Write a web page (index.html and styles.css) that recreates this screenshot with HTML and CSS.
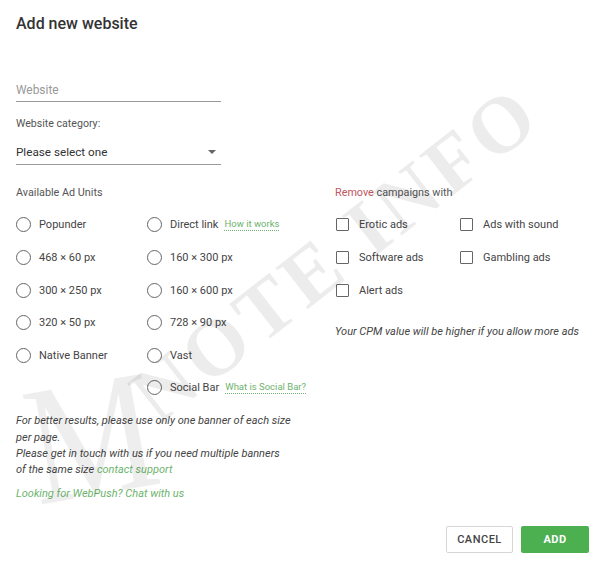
FILE: index.html
```html
<!DOCTYPE html>
<html>
<head>
<meta charset="utf-8">
<link rel="stylesheet" href="styles.css">
</head>
<body>
<div class="dialog">
  <h1 class="title">Add new website</h1>
  <div class="field input">Website</div>
  <div class="label">Website category:</div>
  <div class="field select"><span>Please select one</span><span class="caret"></span></div>

  <div class="sections">
    <div class="left">
      <div class="heading">Available Ad Units</div>
      <div class="units">
        <div class="opt"><span class="radio"></span>Popunder</div>
        <div class="opt"><span class="radio"></span>Direct link<a class="help">How it works</a></div>
        <div class="opt"><span class="radio"></span>468 × 60 px</div>
        <div class="opt"><span class="radio"></span>160 × 300 px</div>
        <div class="opt"><span class="radio"></span>300 × 250 px</div>
        <div class="opt"><span class="radio"></span>160 × 600 px</div>
        <div class="opt"><span class="radio"></span>320 × 50 px</div>
        <div class="opt"><span class="radio"></span>728 × 90 px</div>
        <div class="opt"><span class="radio"></span>Native Banner</div>
        <div class="opt"><span class="radio"></span>Vast</div>
        <div class="opt"></div>
        <div class="opt"><span class="radio"></span>Social Bar<a class="help">What is Social Bar?</a></div>
      </div>
      <p class="note">For better results, please use only one banner of each size<br>per page.<br>Please get in touch with us if you need multiple banners<br>of the same size <a class="green">contact support</a></p>
      <p class="note green">Looking for WebPush? Chat with us</p>
    </div>
    <div class="right">
      <div class="heading"><span class="red">Remove</span> campaigns with</div>
      <div class="checks">
        <div class="opt"><span class="box"></span>Erotic ads</div>
        <div class="opt"><span class="box"></span>Ads with sound</div>
        <div class="opt"><span class="box"></span>Software ads</div>
        <div class="opt"><span class="box"></span>Gambling ads</div>
        <div class="opt"><span class="box"></span>Alert ads</div>
      </div>
      <p class="cpm">Your CPM value will be higher if you allow more ads</p>
    </div>
  </div>

  <div class="actions">
    <button class="btn cancel">CANCEL</button>
    <button class="btn add">ADD</button>
  </div>
  <div class="wm wm-m">M</div>
  <div class="wm wm-text">NOTE INFO</div>
</div>
</body>
</html>
```
FILE: styles.css
```css
html, body {
  margin: 0;
  padding: 0;
  background: #fff;
}
body {
  font-family: Roboto, "Liberation Sans", sans-serif;
  color: #444;
  width: 600px;
  height: 564px;
  overflow: hidden;
}
.dialog {
  position: relative;
  height: 564px;
  box-sizing: border-box;
  padding: 14px 11px 0 16px;
  overflow: hidden;
}
.title {
  margin: 0;
  font-size: 16px;
  line-height: 20px;
  font-weight: 500;
  color: #333;
}
.field {
  width: 205px;
  height: 24px;
  line-height: 24px;
  border-bottom: 1px solid #9a9a9a;
}
.input {
  margin-top: 43px;
  padding-top: 1px;
  height: 23px;
  color: #999;
  font-size: 11.9px;
}
.label {
  margin-top: 14px;
  font-size: 10.6px;
  line-height: 16px;
  color: #555;
}
.select {
  margin-top: 8px;
  color: #333;
  font-size: 11.7px;
  display: flex;
  justify-content: space-between;
  align-items: center;
}
.caret {
  width: 0;
  height: 0;
  border-left: 4px solid transparent;
  border-right: 4px solid transparent;
  border-top: 4px solid #666;
  margin-right: 5px;
}
.sections {
  display: flex;
  margin-top: 20px;
}
.left {
  width: 319px;
}
.right {
  flex: 1;
}
.heading {
  font-size: 10.8px;
  line-height: 16px;
  color: #555;
}
.red {
  color: #c0585e;
}
.units {
  display: grid;
  grid-template-columns: 131px auto;
  grid-auto-rows: 32.6px;
  margin-top: 7.7px;
}
.checks {
  display: grid;
  grid-template-columns: 124px auto;
  grid-auto-rows: 32.6px;
  margin-top: 7.7px;
  padding-left: 1px;
}
.opt {
  display: flex;
  align-items: center;
  font-size: 11px;
  color: #444;
  white-space: nowrap;
}
.radio {
  width: 13px;
  height: 13px;
  border: 1.6px solid #666;
  border-radius: 50%;
  margin-right: 8px;
  flex: none;
}
.box {
  width: 11px;
  height: 11px;
  border: 1.6px solid #666;
  border-radius: 1px;
  margin-right: 10px;
  flex: none;
}
.help {
  margin-left: 6px;
  font-size: 9.5px;
  color: #6db36d;
  border-bottom: 1px dotted #6db36d;
  line-height: 12px;
}
.note {
  margin: 9px 0 0;
  font-size: 11px;
  line-height: 16.3px;
  font-style: italic;
  color: #444;
  white-space: nowrap;
}
.note + .note {
  margin-top: 7.5px;
}
.green {
  color: #6db36d;
}
.cpm {
  margin: 17.7px 0 0;
  font-size: 11px;
  line-height: 16px;
  font-style: italic;
  color: #444;
}
.actions {
  display: flex;
  justify-content: flex-end;
  gap: 8px;
  margin-top: 24px;
}
.btn {
  height: 27px;
  font-family: Roboto, "Liberation Sans", sans-serif;
  font-size: 11px;
  font-weight: 500;
  letter-spacing: 0.5px;
  border-radius: 2px;
  cursor: pointer;
}
.cancel {
  width: 67px;
  background: #fff;
  border: 1px solid #d6d6d6;
  color: #444;
}
.add {
  width: 68px;
  background: #4caf50;
  border: none;
  color: #fff;
  font-weight: 700;
}
.wm {
  position: absolute;
  font-family: "Liberation Serif", serif;
  font-weight: 700;
  color: rgba(0, 0, 0, 0.075);
  white-space: nowrap;
  pointer-events: none;
}
.wm-text {
  left: 158px;
  top: 359px;
  font-size: 80px;
  line-height: 80px;
  letter-spacing: 5px;
  transform: rotate(-38deg);
  transform-origin: 0 67px;
}
.wm-m {
  left: 38px;
  top: 363px;
  font-size: 170px;
  line-height: 170px;
  font-weight: 400;
  transform: rotate(-10deg) scaleX(0.85);
  transform-origin: 0 142px;
  color: rgba(0, 0, 0, 0.065);
}
```
